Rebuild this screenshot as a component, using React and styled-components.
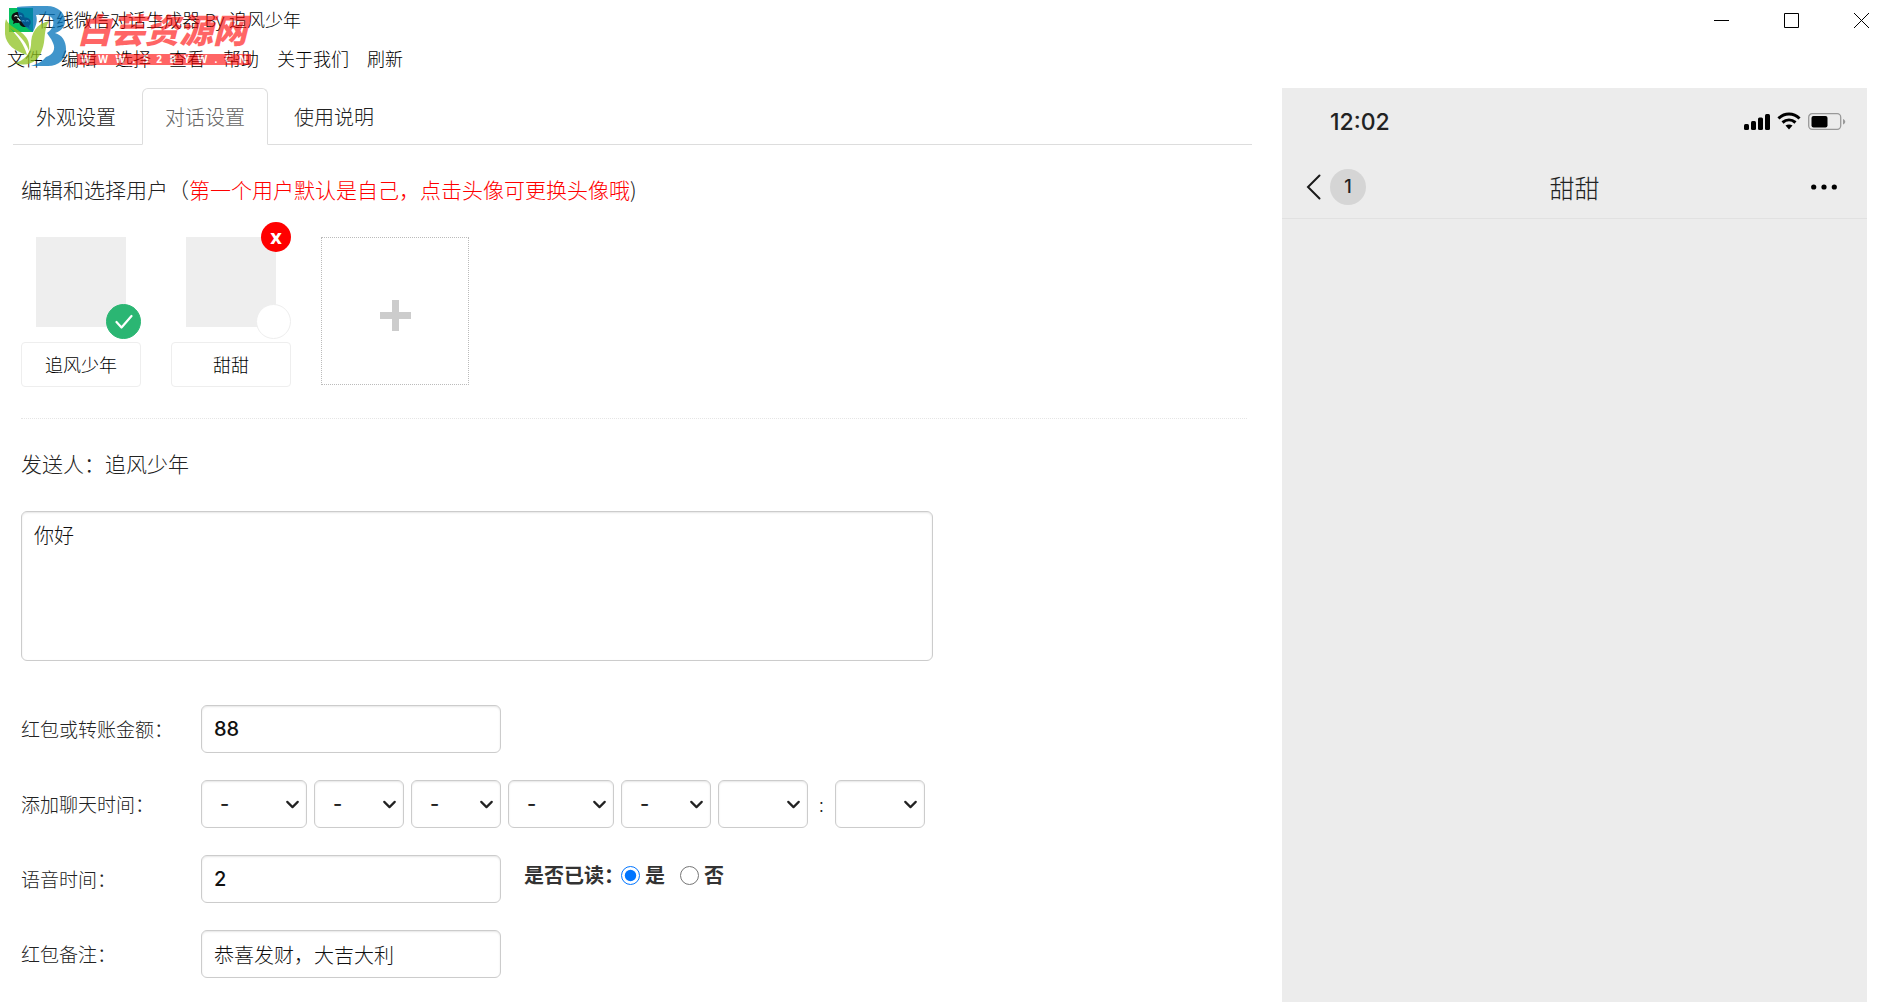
import React, { useState } from 'react'
import styled, { createGlobalStyle } from 'styled-components'
import { ChevronDown } from 'lucide-react'

const MENU = ['文件', '编辑', '选择', '查看', '帮助', '关于我们', '刷新']
const TABS = ['外观设置', '对话设置', '使用说明']
const DATE_FIELDS = [
  { label: '年', wide: true, value: '-' },
  { label: '月', value: '-' },
  { label: '日', value: '-' },
  { label: '星期', wide: true, value: '-' },
  { label: '时段', value: '-' },
  { label: '小时', value: '' },
]

const TimeSelect = ({ label, wide, value }) => (
  <SelectWrap $wide={wide}>
    <Select aria-label={label} defaultValue={value}>
      <option value={value}>{value}</option>
    </Select>
    <ChevronDown size={21} strokeWidth={2.5} />
  </SelectWrap>
)

const SiteMark = () => (
  <Mark aria-hidden="true">
    <svg width="62" height="62" viewBox="0 0 62 62">
      <path
        d="M12 1 C18 0 26 0 34 0 H42 C53 0 60 7 60 15 C60 21 56 25 50 27 C57 29 61 35 61 43 C61 53 54 60 43 60 H26 C33 58 38 55 41 51 C48 49 51 43 48 37 C46 32 43 29 42 27 C48 23 50 17 47 12 C44 8 38 8 31 9 C33 14 31 20 28 26 C19 22 13 13 12 1 Z"
        fill="#0072ba"
        opacity="0.75"
      />
      <path
        d="M1 13 C4 20 11 22 17 27 C23 32 25 37 24 45 C20 34 13 28 5 22 C13 31 19 38 22 49 C10 45 1 39 0 28 C-1 22 0 17 1 13 Z M44 15 C31 18 26 27 26 39 C25 48 20 54 10 57 C25 62 34 54 37 44 C41 34 38 25 44 15 Z"
        fill="#8dc21f"
        opacity="0.75"
      />
    </svg>
    <MarkText>
      <strong>白芸资源网</strong>
      <MarkUrl>
        {'WWW.52BYW.CN'.split('').map((c, i) => (
          <span key={i}>{c}</span>
        ))}
      </MarkUrl>
    </MarkText>
  </Mark>
)

const App = () => {
  const [tab, setTab] = useState('对话设置')
  const [sender, setSender] = useState(0)
  const [users, setUsers] = useState(['追风少年', '甜甜'])
  const [read, setRead] = useState('是')

  const renameUser = (index, name) => {
    setUsers(users.map((user, i) => (i === index ? name : user)))
  }

  const removeUser = (index) => {
    setUsers(users.filter((user, i) => i !== index))
    setSender(0)
  }

  return (
    <>
      <GlobalStyle />
      <Window>
        <TitleBar>
          <svg width="24" height="24" viewBox="0 0 24 24" aria-hidden="true">
            <rect width="24" height="24" fill="#07c160" />
            <path d="M9 4C5 4 2.500 6.300 2.500 9.300c0 1.700.8 3.200 2.200 4.200L4 16l2.800-1.300c4 .9 8.700-1 8.700-5.400C15.500 6.300 13 4 9 4z" fill="#111" />
            <path d="M16 9.500c-3.200 0-5.700 2-5.700 4.800s2.500 4.800 5.700 4.800c.8 0 1.500-.1 2.200-.3l2.300 1.200-.6-2c1.200-.9 1.900-2.200 1.900-3.700 0-2.800-2.600-4.800-5.800-4.800z" fill="#111" />
            <path d="M5.500 8.500q1.500-2 3 0M10 8.500q1.500-2 3 0M13 13.500q1.200-2 2.500 0M17 13.500q1.200-2 2.500 0M8.500 10l3 3" fill="none" stroke="#dfe" strokeWidth="1.200" />
          </svg>
          <h1>在线微信对话生成器 By 追风少年</h1>
          <WindowButtons>
            <button aria-label="最小化">
              <svg width="15" height="15"><path d="M0 7.500h15" /></svg>
            </button>
            <button aria-label="最大化">
              <svg width="15" height="15"><path d="M.5 .5h14v14h-14z" /></svg>
            </button>
            <button aria-label="关闭">
              <svg width="15" height="15"><path d="M0 0l15 15M15 0L0 15" /></svg>
            </button>
          </WindowButtons>
        </TitleBar>
        <MenuBar>
          {MENU.map((item) => (
            <button key={item}>{item}</button>
          ))}
        </MenuBar>
        <SiteMark />

        <Content>
          <main>
            <TabList>
              {TABS.map((name) => (
                <Tab key={name} $active={tab === name} onClick={() => setTab(name)}>
                  {name}
                </Tab>
              ))}
            </TabList>

            <Panel>
              <Heading>
                编辑和选择用户（<em>第一个用户默认是自己，点击头像可更换头像哦</em>)
              </Heading>

              <Users>
                {users.map((name, i) => (
                  <User key={i}>
                    <Avatar aria-label="更换头像" />
                    <Pick
                      $active={sender === i}
                      aria-label={`选择用户${i + 1}`}
                      onClick={() => setSender(i)}
                    >
                      {sender === i && (
                        <svg width="18" height="16" viewBox="0 0 18 16">
                          <path d="M1.500 8l5 5.500L16.500 2" fill="none" stroke="#fff" strokeWidth="2.200" strokeLinecap="round" strokeLinejoin="round" />
                        </svg>
                      )}
                    </Pick>
                    {i > 0 && <Remove aria-label="删除用户" onClick={() => removeUser(i)}>x</Remove>}
                    <NameInput
                      aria-label="用户名"
                      value={name}
                      onChange={(e) => renameUser(i, e.target.value)}
                    />
                  </User>
                ))}
                <AddUser aria-label="添加用户" onClick={() => setUsers([...users, '新用户'])}>
                  <svg width="31" height="31" viewBox="0 0 31 31">
                    <path d="M15.500 0v31M0 15.500h31" stroke="#ccc" strokeWidth="7" />
                  </svg>
                </AddUser>
              </Users>

              <Heading as="p">发送人：{users[sender]}</Heading>
              <Message aria-label="消息内容" defaultValue="你好" />

              <Form>
                <label htmlFor="amount">红包或转账金额：</label>
                <Field>
                  <Input id="amount" defaultValue="88" />
                </Field>

                <span>添加聊天时间：</span>
                <Field>
                  {DATE_FIELDS.map((field) => (
                    <TimeSelect key={field.label} {...field} />
                  ))}
                  <Colon>:</Colon>
                  <TimeSelect label="分钟" value="" />
                </Field>

                <label htmlFor="voice">语音时间：</label>
                <Field>
                  <Input id="voice" defaultValue="2" />
                  <ReadState>
                    <legend>是否已读：</legend>
                    {['是', '否'].map((value) => (
                      <label key={value}>
                        <input
                          type="radio"
                          name="read"
                          checked={read === value}
                          onChange={() => setRead(value)}
                        />
                        {value}
                      </label>
                    ))}
                  </ReadState>
                </Field>

                <label htmlFor="remark">红包备注：</label>
                <Field>
                  <Input id="remark" $light defaultValue="恭喜发财，大吉大利" />
                </Field>
              </Form>
            </Panel>
          </main>

          <Phone>
            <StatusBar>
              <time>12:02</time>
              <svg width="102" height="20" viewBox="0 0 102 20" aria-hidden="true">
                <rect x="0" y="12" width="5" height="6" rx="1.500" />
                <rect x="7" y="9" width="5" height="9" rx="1.500" />
                <rect x="14" y="5.500" width="5" height="12.500" rx="1.500" />
                <rect x="21" y="2" width="5" height="16" rx="1.500" />
                <path d="M34.500 6.500 C40.500 .5 49.500 .5 55.500 6.500 M38.500 10.500 C42.500 7 47.500 7 51.500 10.500" fill="none" stroke="#000" strokeWidth="3" />
                <path d="M41.500 13.500 C43.500 12 46.500 12 48.500 13.500 L45 17.500z" />
                <rect x="64.700" y="1.700" width="32" height="15.600" rx="3.500" fill="none" stroke="#999" strokeWidth="1.300" />
                <rect x="67.500" y="4" width="16" height="11.500" rx="2" />
                <path d="M99 7c3 1.500 3 4 0 5.500z" fill="#999" />
              </svg>
            </StatusBar>
            <ChatBar>
              <Back aria-label="返回">
                <svg width="15" height="26" viewBox="0 0 15 26">
                  <path d="M13.500 1.500L2 13L13.500 24.500" fill="none" stroke="#1a1a1a" strokeWidth="2" strokeLinecap="round" />
                </svg>
                <span>1</span>
              </Back>
              <h2>{users[1]}</h2>
              <More aria-label="更多">
                <svg width="26" height="6" viewBox="0 0 26 6">
                  <circle cx="2.700" cy="3" r="2.600" />
                  <circle cx="13" cy="3" r="2.600" />
                  <circle cx="23.300" cy="3" r="2.600" />
                </svg>
              </More>
            </ChatBar>
          </Phone>
        </Content>
      </Window>
    </>
  )
}

export default App

const GlobalStyle = createGlobalStyle`
*{
  box-sizing: border-box;
}
body{
  margin: 0;
  background: #fff;
  color: #222;
  font-family: "Noto Sans CJK SC", sans-serif;
  font-weight: 300;
}
h1, h2, p{
  margin: 0;
  font-weight: 300;
}
button{
  font: inherit;
  color: inherit;
  background: none;
  border: none;
  padding: 0;
  cursor: pointer;
}
input, select, textarea{
  font: inherit;
}
`

const Window = styled.div`
position: relative;
min-height: 100vh;
display: flex;
flex-direction: column;
`

const TitleBar = styled.header`
height: 40px;
padding: 0 11px 0 9px;
display: flex;
align-items: center;
gap: 5px;
color: #000;

h1{
  font-family: "Open Sans", "Noto Sans CJK SC", sans-serif;
  font-size: 18px;
  line-height: 24px;
}
`

const WindowButtons = styled.div`
margin-left: auto;
display: flex;
gap: 55px;

button{
  display: flex;
}
svg{
  fill: none;
  stroke: #000;
  stroke-width: 1px;
}
`

const MenuBar = styled.nav`
height: 36px;
margin-bottom: 2px;
padding: 0 7px;
display: flex;
align-items: center;
gap: 18px;
font-size: 18px;
color: #000;
`

// translucent site stamp over the title and menu
const Mark = styled.div`
position: absolute;
top: 6px;
left: 5px;
display: flex;
gap: 10px;
pointer-events: none;
`

const MarkText = styled.div`
width: 174px;
opacity: 0.6;

strong{
  display: block;
  font-size: 34px;
  line-height: 46px;
  font-weight: 900;
  font-style: italic;
  color: #f00;
  white-space: nowrap;
}
`

const MarkUrl = styled.div`
display: flex;
justify-content: space-between;
padding: 0 4px;
background: #f00;
color: #fff;
font-family: "Open Sans", sans-serif;
font-size: 10px;
line-height: 11px;
font-weight: 700;
margin-top: 2px;
`

const Content = styled.div`
flex: 1;
display: grid;
grid-template-columns: minmax(0, 1fr) 585px;
column-gap: 30px;
padding: 10px 13px 0;
`

const TabList = styled.nav`
display: flex;
gap: 3px;
border-bottom: 1px solid #ddd;
`

const Tab = styled.button`
height: 57px;
padding: 0 22px;
margin-bottom: -1px;
font-size: 20px;
border: 1px solid ${(p) => (p.$active ? '#ddd' : 'transparent')};
border-bottom-color: ${(p) => (p.$active ? '#fff' : 'transparent')};
border-radius: 6px 6px 0 0;
color: ${(p) => (p.$active ? '#666' : '#222')};
`

const Panel = styled.section`
padding: 29px 5px 24px 8px;
`

const Heading = styled.h2`
font-size: 21px;
line-height: 30px;

em{
  font-style: normal;
  color: #f00;
}
`

const Users = styled.div`
display: flex;
gap: 30px;
padding: 33px 0 31px;
margin-bottom: 29px;
border-bottom: 1px dotted #e5e5e5;
`

const User = styled.div`
position: relative;
width: 120px;
display: flex;
flex-direction: column;
align-items: center;
gap: 15px;
`

const Avatar = styled.button`
width: 90px;
height: 90px;
background: #eee;
`

const Pick = styled.button`
position: absolute;
top: 67px;
right: 0;
width: 35px;
height: 35px;
display: flex;
align-items: center;
justify-content: center;
border-radius: 50%;
border: 1px solid ${(p) => (p.$active ? '#2bb673' : '#eee')};
background: ${(p) => (p.$active ? '#2bb673' : '#fff')};
`

const Remove = styled.button`
position: absolute;
top: -15px;
right: 0;
width: 30px;
height: 30px;
border-radius: 50%;
background: #f00;
color: #fff;
font-family: "Open Sans", sans-serif;
font-size: 20px;
line-height: 28px;
font-weight: 700;
`

const NameInput = styled.input`
width: 100%;
height: 45px;
padding: 0 0 2px;
border: 1px solid #eee;
border-radius: 4px;
background: #fff;
text-align: center;
font-size: 18px;
color: #000;
`

const AddUser = styled.button`
width: 148px;
height: 148px;
padding-top: 8px;
display: flex;
align-items: center;
justify-content: center;
border: 1px dotted #bbb;
`

const Message = styled.textarea`
display: block;
width: 75%;
max-width: 912px;
height: 150px;
margin-top: 33px;
padding: 9px 12px;
border: 1px solid #ccc;
border-radius: 6px;
box-shadow: inset 0 1px 2px rgba(0, 0, 0, 0.1);
resize: none;
font-size: 20px;
line-height: 28px;
color: #111;
`

const Form = styled.form`
display: grid;
grid-template-columns: 180px 1fr;
row-gap: 27px;
align-items: center;
margin-top: 44px;
font-size: 19px;
line-height: 28px;
`

const Field = styled.div`
display: flex;
gap: 7px;
height: 48px;
`

const Input = styled.input`
width: 300px;
height: 48px;
padding: 0 12px;
border: 1px solid #ccc;
border-radius: 6px;
box-shadow: inset 0 1px 2px rgba(0, 0, 0, 0.1);
background: #fff;
font-family: Inter, "Noto Sans CJK SC", sans-serif;
font-weight: ${(p) => (p.$light ? 300 : 500)};
font-size: 20px;
color: #111;
`

const SelectWrap = styled.div`
display: grid;
align-items: center;
width: ${(p) => (p.$wide ? '106px' : '90px')};

svg{
  grid-area: 1 / 1;
  justify-self: end;
  margin-right: 4px;
  color: #222;
  pointer-events: none;
}
`

const Select = styled.select`
grid-area: 1 / 1;
appearance: none;
height: 48px;
padding: 0 18px;
border: 1px solid #ccc;
border-radius: 6px;
box-shadow: inset 0 1px 2px rgba(0, 0, 0, 0.1);
background: #fff;
font-family: Inter, "Noto Sans CJK SC", sans-serif;
font-weight: 500;
font-size: 20px;
color: #222;
`

const Colon = styled.span`
width: 13px;
text-align: center;
line-height: 48px;
`

const ReadState = styled.fieldset`
display: flex;
align-items: center;
gap: 15px;
height: 40px;
margin: 0 0 0 16px;
padding: 0;
border: none;
font-size: 20px;
font-weight: 700;
color: #333;

legend{
  float: left;
  width: 82px;
  padding: 0;
  white-space: nowrap;
}
label{
  display: flex;
  align-items: center;
  gap: 5px;
}
input{
  width: 19px;
  height: 19px;
  margin: 0;
}
`

const Phone = styled.aside`
background: #ececec;
`

const StatusBar = styled.div`
display: flex;
align-items: center;
justify-content: space-between;
height: 67px;
padding: 0 21px 0 48px;

time{
  font-family: Inter, sans-serif;
  font-weight: 500;
  font-size: 23px;
}
`

const ChatBar = styled.div`
display: grid;
grid-template-columns: 1fr auto 1fr;
align-items: center;
height: 64px;
padding: 0 24px;
border-bottom: 1px solid #e1e1e1;

h2{
  font-size: 25px;
  line-height: 36px;
}
`

const Back = styled.button`
justify-self: start;
display: flex;
align-items: center;
gap: 9px;

span{
  width: 36px;
  height: 36px;
  border-radius: 50%;
  background: #d5d5d5;
  font-family: Inter, sans-serif;
  font-weight: 500;
  font-size: 18px;
  line-height: 36px;
}
`

const More = styled.button`
justify-self: end;
display: flex;
padding-right: 6px;
`
